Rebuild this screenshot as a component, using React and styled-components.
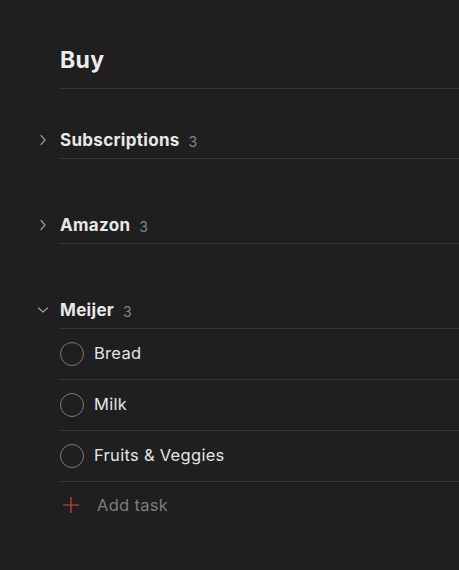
import React from 'react'
import styled, { createGlobalStyle } from 'styled-components'

const Global = createGlobalStyle`
  html, body {
    margin: 0;
    padding: 0;
    background: #1f1f1f;
  }
  body {
    font-family: Inter, "Noto Sans", "Liberation Sans", sans-serif;
    color: #e6e6e6;
    -webkit-font-smoothing: antialiased;
  }
`

const Page = styled.main`
  min-height: 570px;
  padding: 45px 0 0 60px;
  box-sizing: border-box;
`

const Title = styled.h1`
  margin: 0;
  font-size: 23px;
  line-height: 30px;
  font-weight: 700;
  letter-spacing: 0.4px;
  color: #ececec;
  padding-bottom: 13px;
  border-bottom: 1px solid #363636;
`

const Section = styled.section`
  margin-top: ${p => (p.$first ? '33px' : '48px')};
`

const Header = styled.div`
  display: flex;
  align-items: center;
  height: 36px;
  border-bottom: 1px solid #363636;
`

const Toggle = styled.span`
  width: 26px;
  margin-left: -26px;
  padding-left: 3px;
  box-sizing: border-box;
  display: flex;
  align-items: center;
  color: #9a9a9a;
`

const Name = styled.span`
  font-size: 17px;
  font-weight: 700;
  letter-spacing: 0.3px;
  color: #e8e8e8;
`

const Count = styled.span`
  font-size: 14px;
  color: #858585;
  margin-left: 9px;
  padding-top: 3px;
`

const Task = styled.div`
  display: flex;
  align-items: center;
  height: 50px;
  border-bottom: 1px solid #363636;
  font-size: 16.5px;
  letter-spacing: 0.3px;
  color: #e4e4e4;
`

const Label = styled.span`
  padding-bottom: 3px;
`

const Check = styled.span`
  width: 22px;
  height: 22px;
  border-radius: 50%;
  border: 1px solid #7a7a7a;
  margin-right: 10px;
  flex-shrink: 0;
`

const AddRow = styled.div`
  display: flex;
  align-items: center;
  height: 46px;
  font-size: 16.5px;
  letter-spacing: 0.3px;
  color: #7d7d7d;
`

const Plus = styled.span`
  width: 24px;
  margin-left: 2px;
  margin-right: 11px;
  display: flex;
  align-items: center;
  color: #a83a3a;
`

const Chevron = ({ open }) => (
  <svg width="12" height="12" viewBox="0 0 12 12" fill="none" stroke="currentColor" strokeWidth="1.2" strokeLinecap="round" strokeLinejoin="round">
    {open ? <path d="M1.5 4l4.5 4 4.5-4" /> : <path d="M4 1.5l4 4.5-4 4.5" />}
  </svg>
)

const sections = [
  { name: 'Subscriptions', count: 3, open: false },
  { name: 'Amazon', count: 3, open: false },
  { name: 'Meijer', count: 3, open: true, tasks: ['Bread', 'Milk', 'Fruits & Veggies'] },
]

export default function App() {
  return (
    <>
      <Global />
      <Page>
        <Title>Buy</Title>
        {sections.map((s, i) => (
          <Section key={s.name} $first={i === 0}>
            <Header>
              <Toggle><Chevron open={s.open} /></Toggle>
              <Name>{s.name}</Name>
              <Count>{s.count}</Count>
            </Header>
            {s.open && (
              <>
                {s.tasks.map(t => (
                  <Task key={t}>
                    <Check />
                    <Label>{t}</Label>
                  </Task>
                ))}
                <AddRow>
                  <Plus>
                    <svg width="18" height="18" viewBox="0 0 18 18" stroke="currentColor" strokeWidth="1.6">
                      <path d="M9 1v16M1 9h16" />
                    </svg>
                  </Plus>
                  Add task
                </AddRow>
              </>
            )}
          </Section>
        ))}
      </Page>
    </>
  )
}
